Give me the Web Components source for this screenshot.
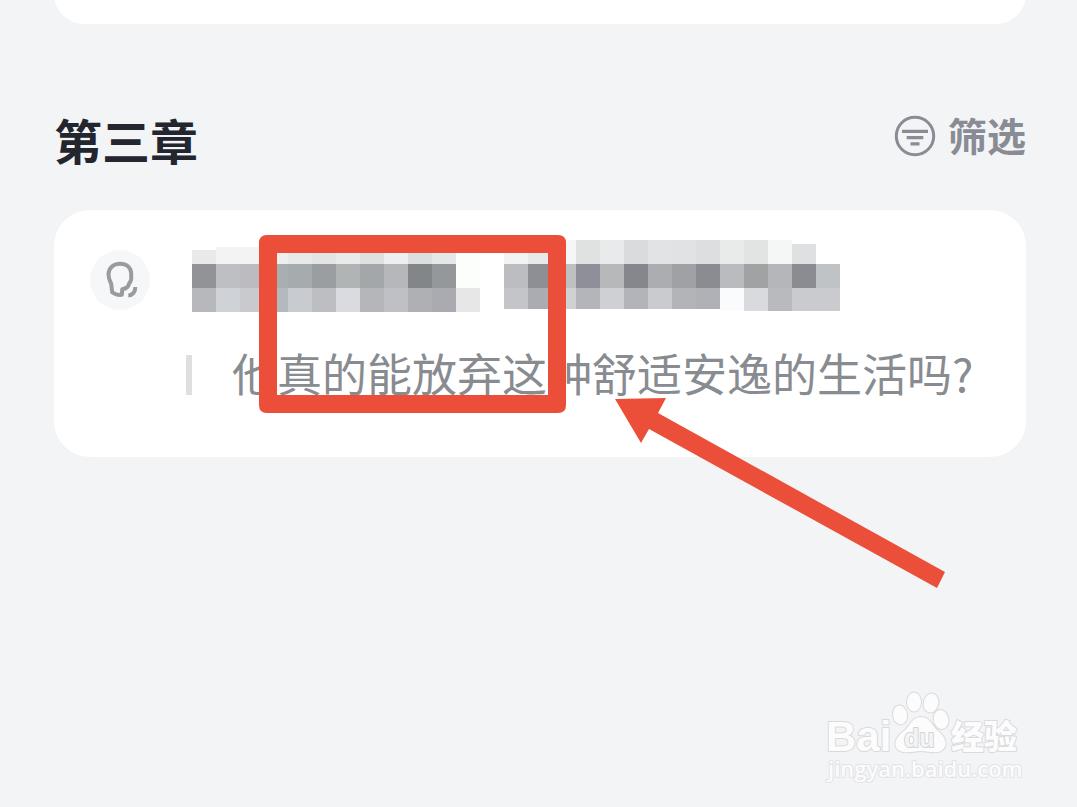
<!DOCTYPE html>
<html lang="zh-CN">
<head>
<meta charset="utf-8">
<meta name="viewport" content="width=device-width, initial-scale=1">
<title>第三章</title>
<style>
html,body{margin:0}
body{background:#f3f4f6;color:#23262f;font-family:"Noto Sans CJK SC",sans-serif}
</style>
</head>
<body>
<chapter-page>
  <note-card slot="previous" compact></note-card>
  <chapter-header>第三章<filter-button slot="action">筛选</filter-button></chapter-header>
  <note-card>
    <reader-avatar slot="author"></reader-avatar>
    <masked-text slot="author"></masked-text>
    <quote-line>他真的能放弃这种舒适安逸的生活吗?</quote-line>
    <red-marker slot="overlay"></red-marker>
  </note-card>
  <site-watermark slot="overlay"></site-watermark>
</chapter-page>
<script>
const define = (name, html, setup) => customElements.define(name, class extends HTMLElement {
  constructor() {
    super();
    const root = this.attachShadow({ mode: 'open' });
    root.innerHTML = html;
    if (setup) setup(root);
  }
});

define('chapter-page', `
<style>
:host{display:block;position:relative;box-sizing:border-box;min-height:100vh;padding:0 51px 0 54px;overflow:hidden}
main{display:flex;flex-direction:column;gap:44px}
.previous{margin-top:-36px;margin-bottom:44px}
</style>
<main><div class="previous"><slot name="previous"></slot></div><slot></slot></main>
<slot name="overlay"></slot>`);

define('chapter-header', `
<style>
:host{display:flex;justify-content:space-between;align-items:flex-start}
h1{margin:0;font-size:48px;line-height:54px;font-weight:700;color:#23262f}
</style>
<h1><slot></slot></h1><slot name="action"></slot>`);

define('filter-button', `
<style>
:host{display:block}
button{display:flex;align-items:flex-start;gap:12px;padding:3px 0 0;border:0;background:none;color:#898c94;font:700 39px/38px "Noto Sans CJK SC",sans-serif;cursor:pointer}
svg{display:block;width:42px;height:42px;fill:none;stroke:currentColor}
</style>
<button type="button">
<svg viewBox="0 0 42 42" aria-hidden="true"><circle cx="21" cy="21" r="18.7" stroke-width="3"/><path d="M8 16.3h26M12.7 22.7h16.6M16.5 28.8h9" stroke-width="3.3"/></svg>
<slot></slot></button>`);

define('note-card', `
<style>
:host{display:block;position:relative;background:#fff;border-radius:36px;padding:30px 36px 52px}
:host([compact]){height:60px;padding:0}
:host([compact]) .author{display:none}
.author{display:flex;align-items:center;gap:42px;margin-bottom:25px}
</style>
<div class="author"><slot name="author"></slot></div><slot></slot><slot name="overlay"></slot>`);

define('reader-avatar', `
<style>
:host{display:block;flex:none;width:60px;height:60px;border-radius:50%;background:#f6f7f9}
svg{display:block;fill:none;stroke:#999ba0;stroke-width:4;stroke-linejoin:round}
</style>
<svg width="60" height="60" viewBox="0 0 60 60" aria-hidden="true">
<path d="M22.2 42.2L21.2 34C19.7 31 18.5 28 18.5 24.5C18.5 18 23.2 13.7 30 13.7C36.8 13.7 41 17.8 41.2 23.5V29C41.2 31.5 39.5 32 38.8 34.5C38.2 37.5 35.5 38.6 32.3 39.2L31.8 44.8C28 45.2 24.8 44.3 22.2 42.2Z"/>
<path d="M38.3 45.2C42.3 45.5 45.4 42.2 45.3 37"/></svg>`);

/* Each row is one line of mosaic tiles, left to right, 24px per tile. */
const TILES = [
  ['e9e9ea','f3f3f3','f3f3f3','efefef','e8eae9','e3e5e5','e9ebea','dfe1e1','eeeff0','dcdfdf','e4e8e7','fcfefc','ffffff','f2f4f3','e8eae9','f5f6f5','e0e1e1','e9eaec','d9dbdc','e2e3e4','e1e2e3','dddedf','e9ebeb','e2e4e4','f5f7f6','dfe0e1','ffffff'],
  ['929397','bebfc2','bcbcc0','a9aeb1','a6acae','9b9ea1','b1b4b5','a4a7a9','b5b7bb','828689','94989a','fcfefc','ffffff','bbbdc1','8d8f94','bec0c2','8e8f99','b6b8ba','86878c','abadb1','9fa1a5','8b8c91','b9bbbe','a0a2a3','b4b6b9','8a8c91','bfc3c6'],
  ['b7b8bb','cfd2d6','c9cace','b3b9bd','c8cbcf','bdbec2','d9dbe0','b4b6b9','bfc0c5','aeb0b4','a9abb0','e6e7e6','ffffff','c3c5c8','abacb1','cfd1d3','b4b5ba','cfd0d3','b3b4b9','c9cbce','b3b4b8','b0b1b7','fafbfd','d9dadd','b9babd','cacbce','c9cbce']
];
define('masked-text', `
<style>:host{display:block;flex:none}svg{display:block;overflow:visible}</style>
<svg width="648" height="80" viewBox="0 0 648 80" shape-rendering="crispEdges" aria-hidden="true"></svg>`, root => {
  const svg = root.querySelector('svg');
  TILES.forEach((row, r) => row.forEach((fill, c) => {
    const tile = document.createElementNS('http://www.w3.org/2000/svg', 'rect');
    const top = r === 0 ? (c === 0 ? 10 : c < 3 ? 7 : c === 25 ? 4 : 0) : r * 24;
    const bottom = r === 2 ? (c > 12 && c < 22 ? 69 : c > 12 ? 71 : 72) : (r + 1) * 24;
    for (const [key, value] of Object.entries({ x: c * 24, y: top, width: 24, height: bottom - top, fill: '#' + fill })) tile.setAttribute(key, value);
    svg.append(tile);
  }));
});

define('quote-line', `
<style>
:host{display:flex;align-items:center;gap:40px;padding-left:96px}
i{flex:none;width:6px;height:40px;background:#dedfe0}
blockquote{margin:0;padding-bottom:4px;font-size:45px;line-height:56px;color:#888b90;white-space:nowrap}
</style>
<i></i><blockquote><slot></slot></blockquote>`);

define('red-marker', `
<style>
:host{display:block;position:absolute;left:205px;top:25px;pointer-events:none}
svg{display:block}
</style>
<svg width="690" height="354" viewBox="0 0 690 354" aria-hidden="true">
<path fill="#ec4f39" fill-rule="evenodd" d="M8 0H299Q307 0 307 8V170Q307 178 299 178H8Q0 178 0 170V8Q0 0 8 0ZM18 18V160H289V18Z"/>
<path fill="#ec4f39" d="M356 164L407 163L399 178L686 337L678 353L390 194L382 208Z"/>
</svg>`);

define('site-watermark', `
<style>
:host{display:block;position:absolute;right:51px;bottom:17px;pointer-events:none}
svg{display:block;overflow:visible;fill:#fcfcfd;stroke:#d9dadc;stroke-width:2;stroke-linejoin:round;paint-order:stroke}
.latin{font-family:"Liberation Sans",sans-serif;font-weight:700}
.cjk{font-family:"Noto Sans CJK SC",sans-serif;font-weight:900}
.url{font-family:"Open Sans",sans-serif;font-weight:600;stroke:#e2e3e5}
.pad{fill:#f3f4f6;stroke:#d3d4d7}
</style>
<svg width="200" height="100" viewBox="0 0 200 100">
<text class="latin" x="0" y="61" font-size="42">Bai</text>
<ellipse cx="74" cy="25" rx="7" ry="9.5" transform="rotate(-8 74 25)"/>
<ellipse cx="88" cy="12" rx="7" ry="9.5"/>
<ellipse cx="105" cy="13" rx="7.3" ry="9.5" transform="rotate(12 105 13)"/>
<ellipse cx="115" cy="29.5" rx="7.3" ry="9.5" transform="rotate(-12 115 29.5)"/>
<path d="M95 27C86 27 84 36 78 41C68 48 67 58 74 61C81 64 88 61 95 61C102 61 109 64 115 61C122 57 121 48 112 41C106 36 104 27 95 27Z"/>
<text class="latin pad" x="78" y="57" font-size="25">du</text>
<text class="cjk" x="125" y="59" font-size="33">经验</text>
<text class="url" x="2" y="87" font-size="22">jingyan.baidu.com</text>
</svg>`);
</script>
</body>
</html>
